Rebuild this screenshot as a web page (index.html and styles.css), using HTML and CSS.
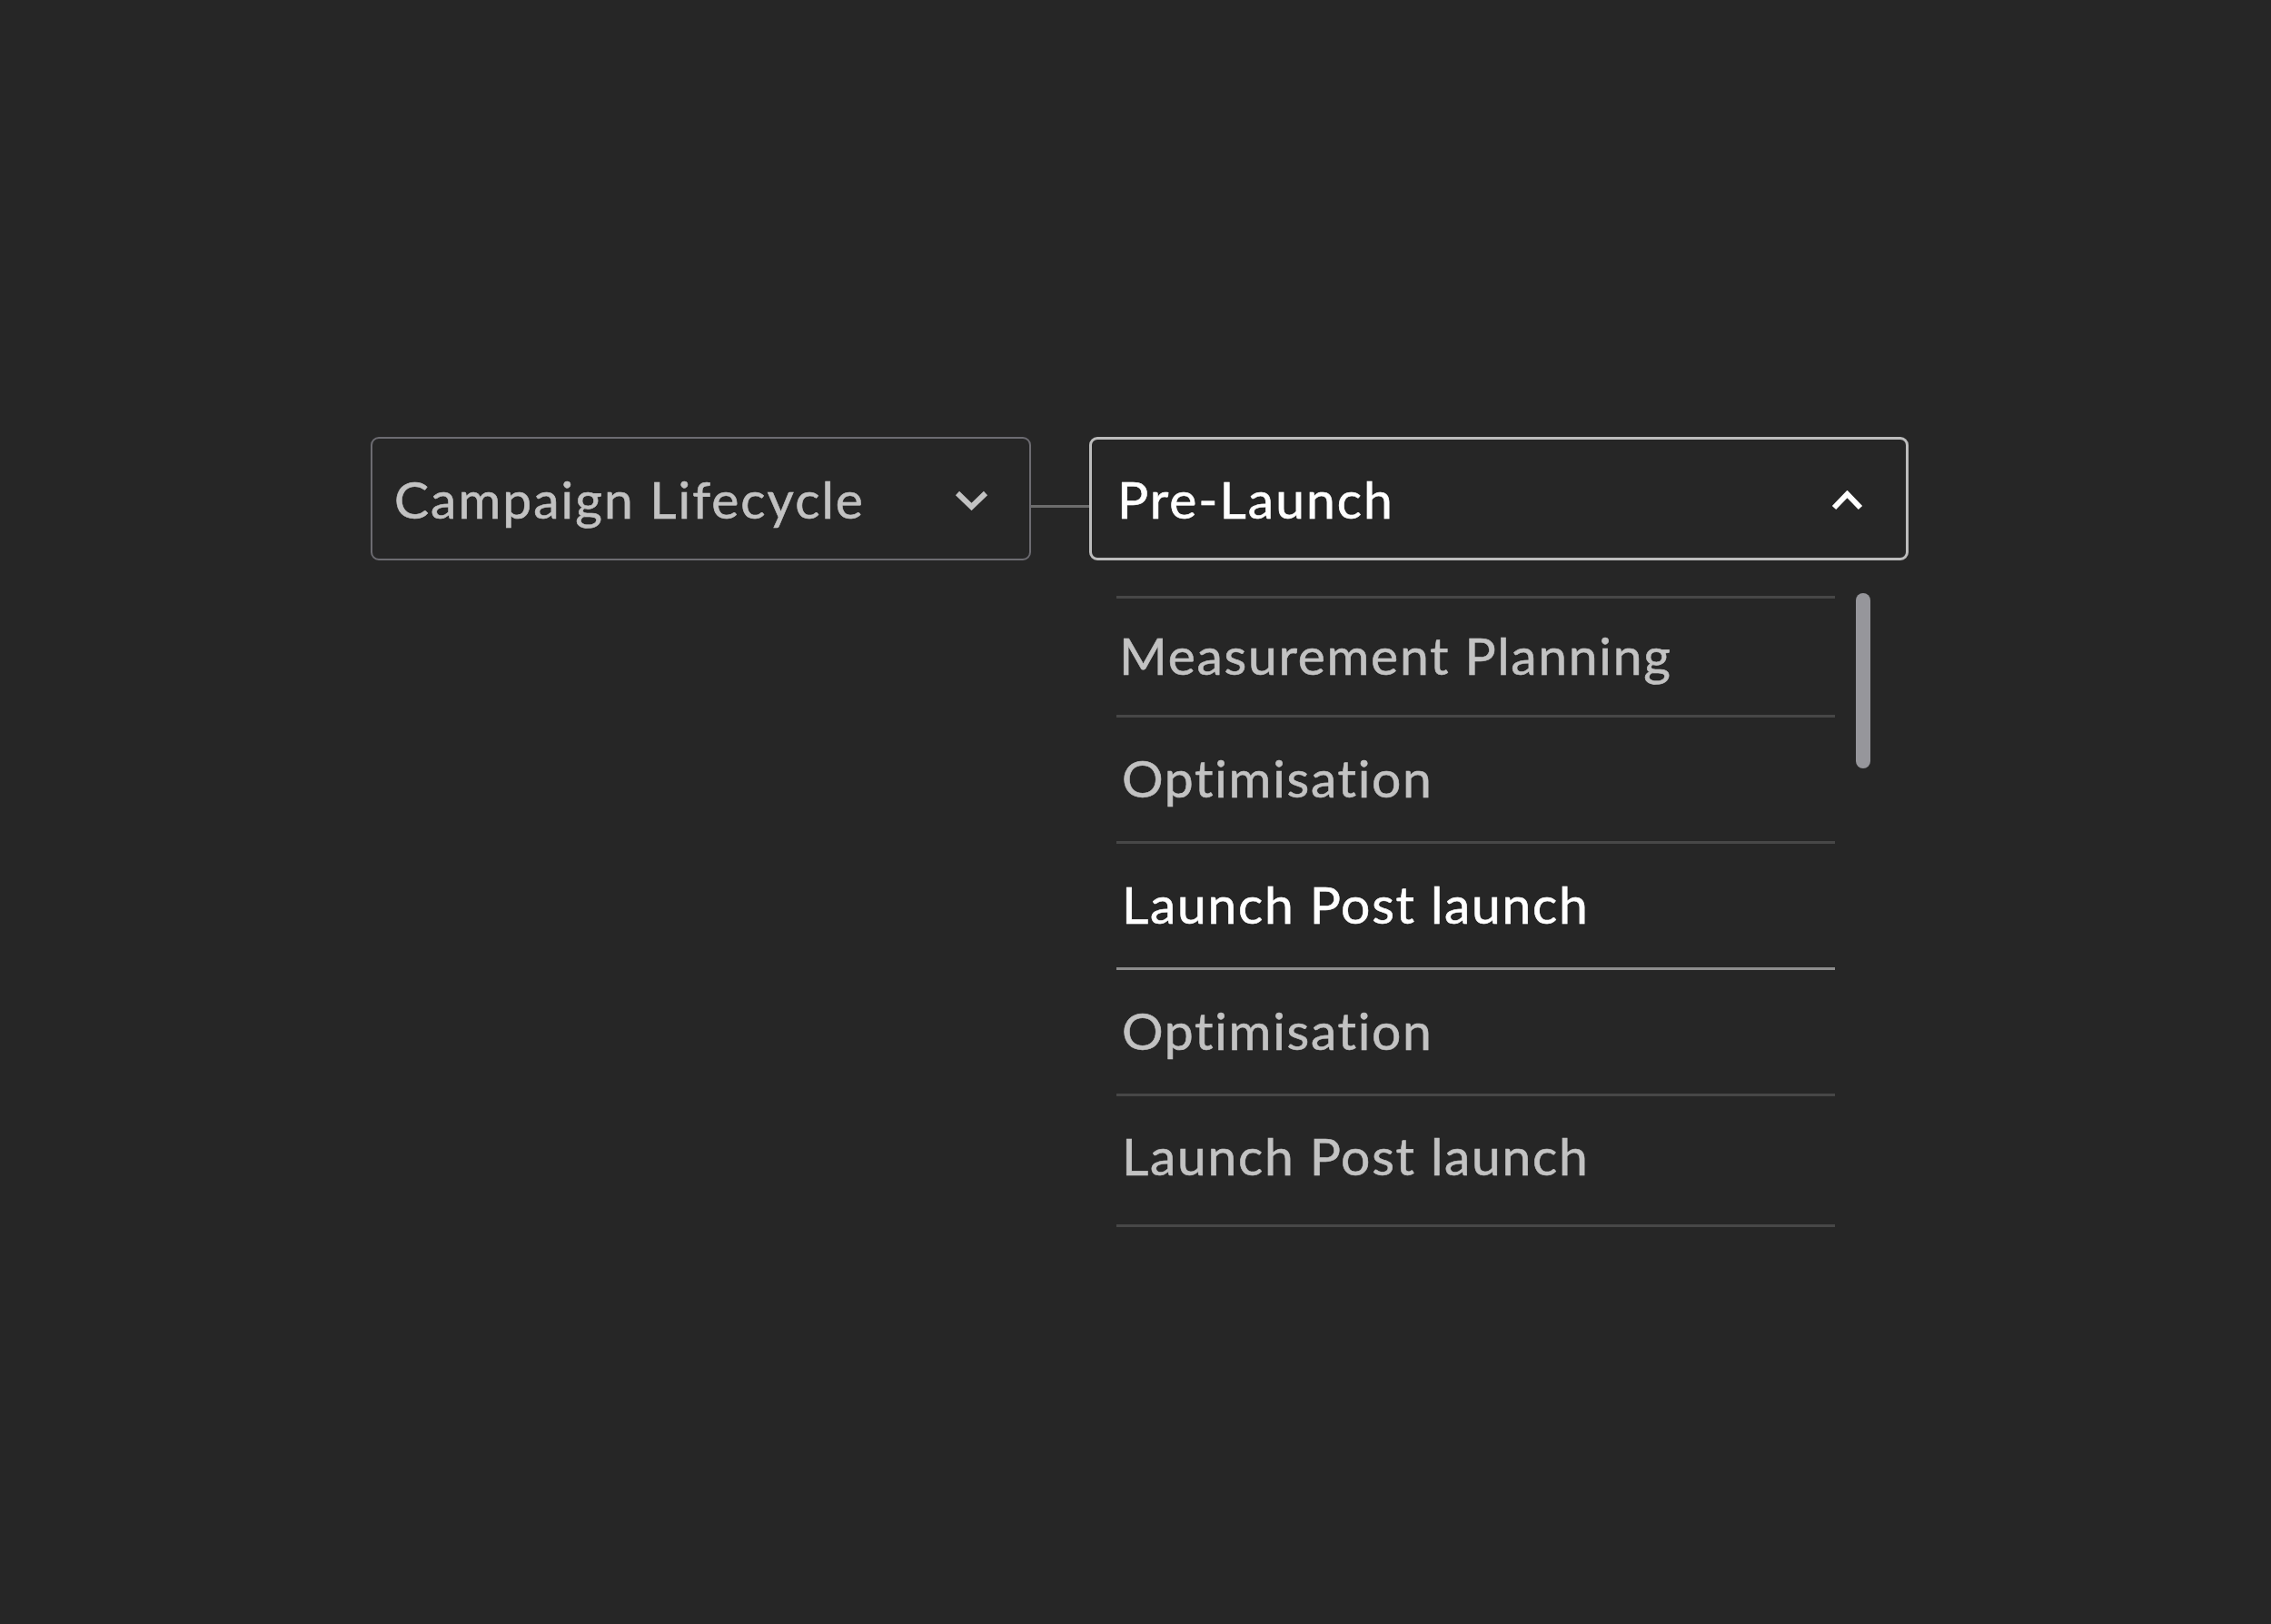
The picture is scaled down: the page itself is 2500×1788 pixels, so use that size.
FILE: index.html
```html
<!DOCTYPE html>
<html lang="en">
<head>
<meta charset="utf-8">
<title>Campaign Lifecycle</title>
<link rel="stylesheet" href="styles.css">
</head>
<body>
<main class="stage">
  <div class="select select--parent">
    <span class="select__label">Campaign Lifecycle</span>
    <svg class="chev" width="37" height="22" viewBox="0 0 37 22" aria-hidden="true"><polyline points="3,3 18.5,18 34,3" fill="none" stroke="#c2c2c2" stroke-width="6" stroke-linejoin="miter" stroke-linecap="butt"/></svg>
  </div>
  <div class="connector"></div>
  <div class="child">
    <div class="select select--open">
      <span class="select__label">Pre-Launch</span>
      <svg class="chev" width="35" height="22" viewBox="0 0 35 22" aria-hidden="true"><polyline points="3,19 17.5,4 32,19" fill="none" stroke="#ffffff" stroke-width="6" stroke-linejoin="miter" stroke-linecap="butt"/></svg>
    </div>
    <div class="dropdown">
      <ul class="options">
        <li class="option">Measurement Planning</li>
        <li class="option">Optimisation</li>
        <li class="option option--active">Launch Post launch</li>
        <li class="option">Optimisation</li>
        <li class="option">Launch Post launch</li>
      </ul>
      <div class="scrollbar"></div>
    </div>
  </div>
</main>
</body>
</html>
```
FILE: styles.css
```css
html, body {
  margin: 0;
  padding: 0;
  background: #262626;
}

body {
  width: 2500px;
  height: 1788px;
  font-family: Lato, "Open Sans", sans-serif;
}

.stage {
  display: flex;
  align-items: flex-start;
  padding: 481px 0 0 408px;
}

.select {
  box-sizing: border-box;
  height: 136px;
  display: flex;
  align-items: center;
  justify-content: space-between;
  border-radius: 9px;
}

.select__label {
  font-size: 57px;
  letter-spacing: 2px;
  line-height: 1;
  -webkit-text-stroke: 0.6px currentColor;
}

.select--parent {
  width: 727px;
  border: 2px solid #6c6b71;
  padding: 0 45px 0 24px;
  color: #c2c2c2;
}

.select--open {
  width: 902px;
  border: 3px solid #bcbcbc;
  padding: 0 47px 0 28px;
  color: #ffffff;
}

.chev {
  display: block;
  flex: none;
  margin-top: 3px;
}

.connector {
  width: 64px;
  height: 3px;
  margin-top: 75px;
  background: #6c6c6c;
}

.child {
  display: flex;
  flex-direction: column;
}

.dropdown {
  display: flex;
  align-items: flex-start;
  gap: 23px;
  margin-top: 36px;
  padding-left: 30px;
}

.options {
  list-style: none;
  margin: 0;
  padding: 3px 0 0;
  width: 791px;
}

.option {
  box-sizing: border-box;
  height: 139px;
  display: flex;
  align-items: center;
  padding: 0 0 4px 6px;
  font-size: 57px;
  letter-spacing: 1.7px;
  line-height: 1;
  color: #c2c2c2;
  -webkit-text-stroke: 0.6px currentColor;
  border-bottom: 3px solid #474747;
}

.option:first-child {
  height: 134px;
  border-top: 3px solid #474747;
  padding-left: 3px;
}

.option:last-child {
  height: 144px;
  padding-bottom: 10px;
}

.option--active {
  color: #ffffff;
  border-bottom-color: #8d8d8d;
}

.scrollbar {
  flex: none;
  width: 16px;
  height: 193px;
  border-radius: 8px;
  background: #96969b;
}
```
